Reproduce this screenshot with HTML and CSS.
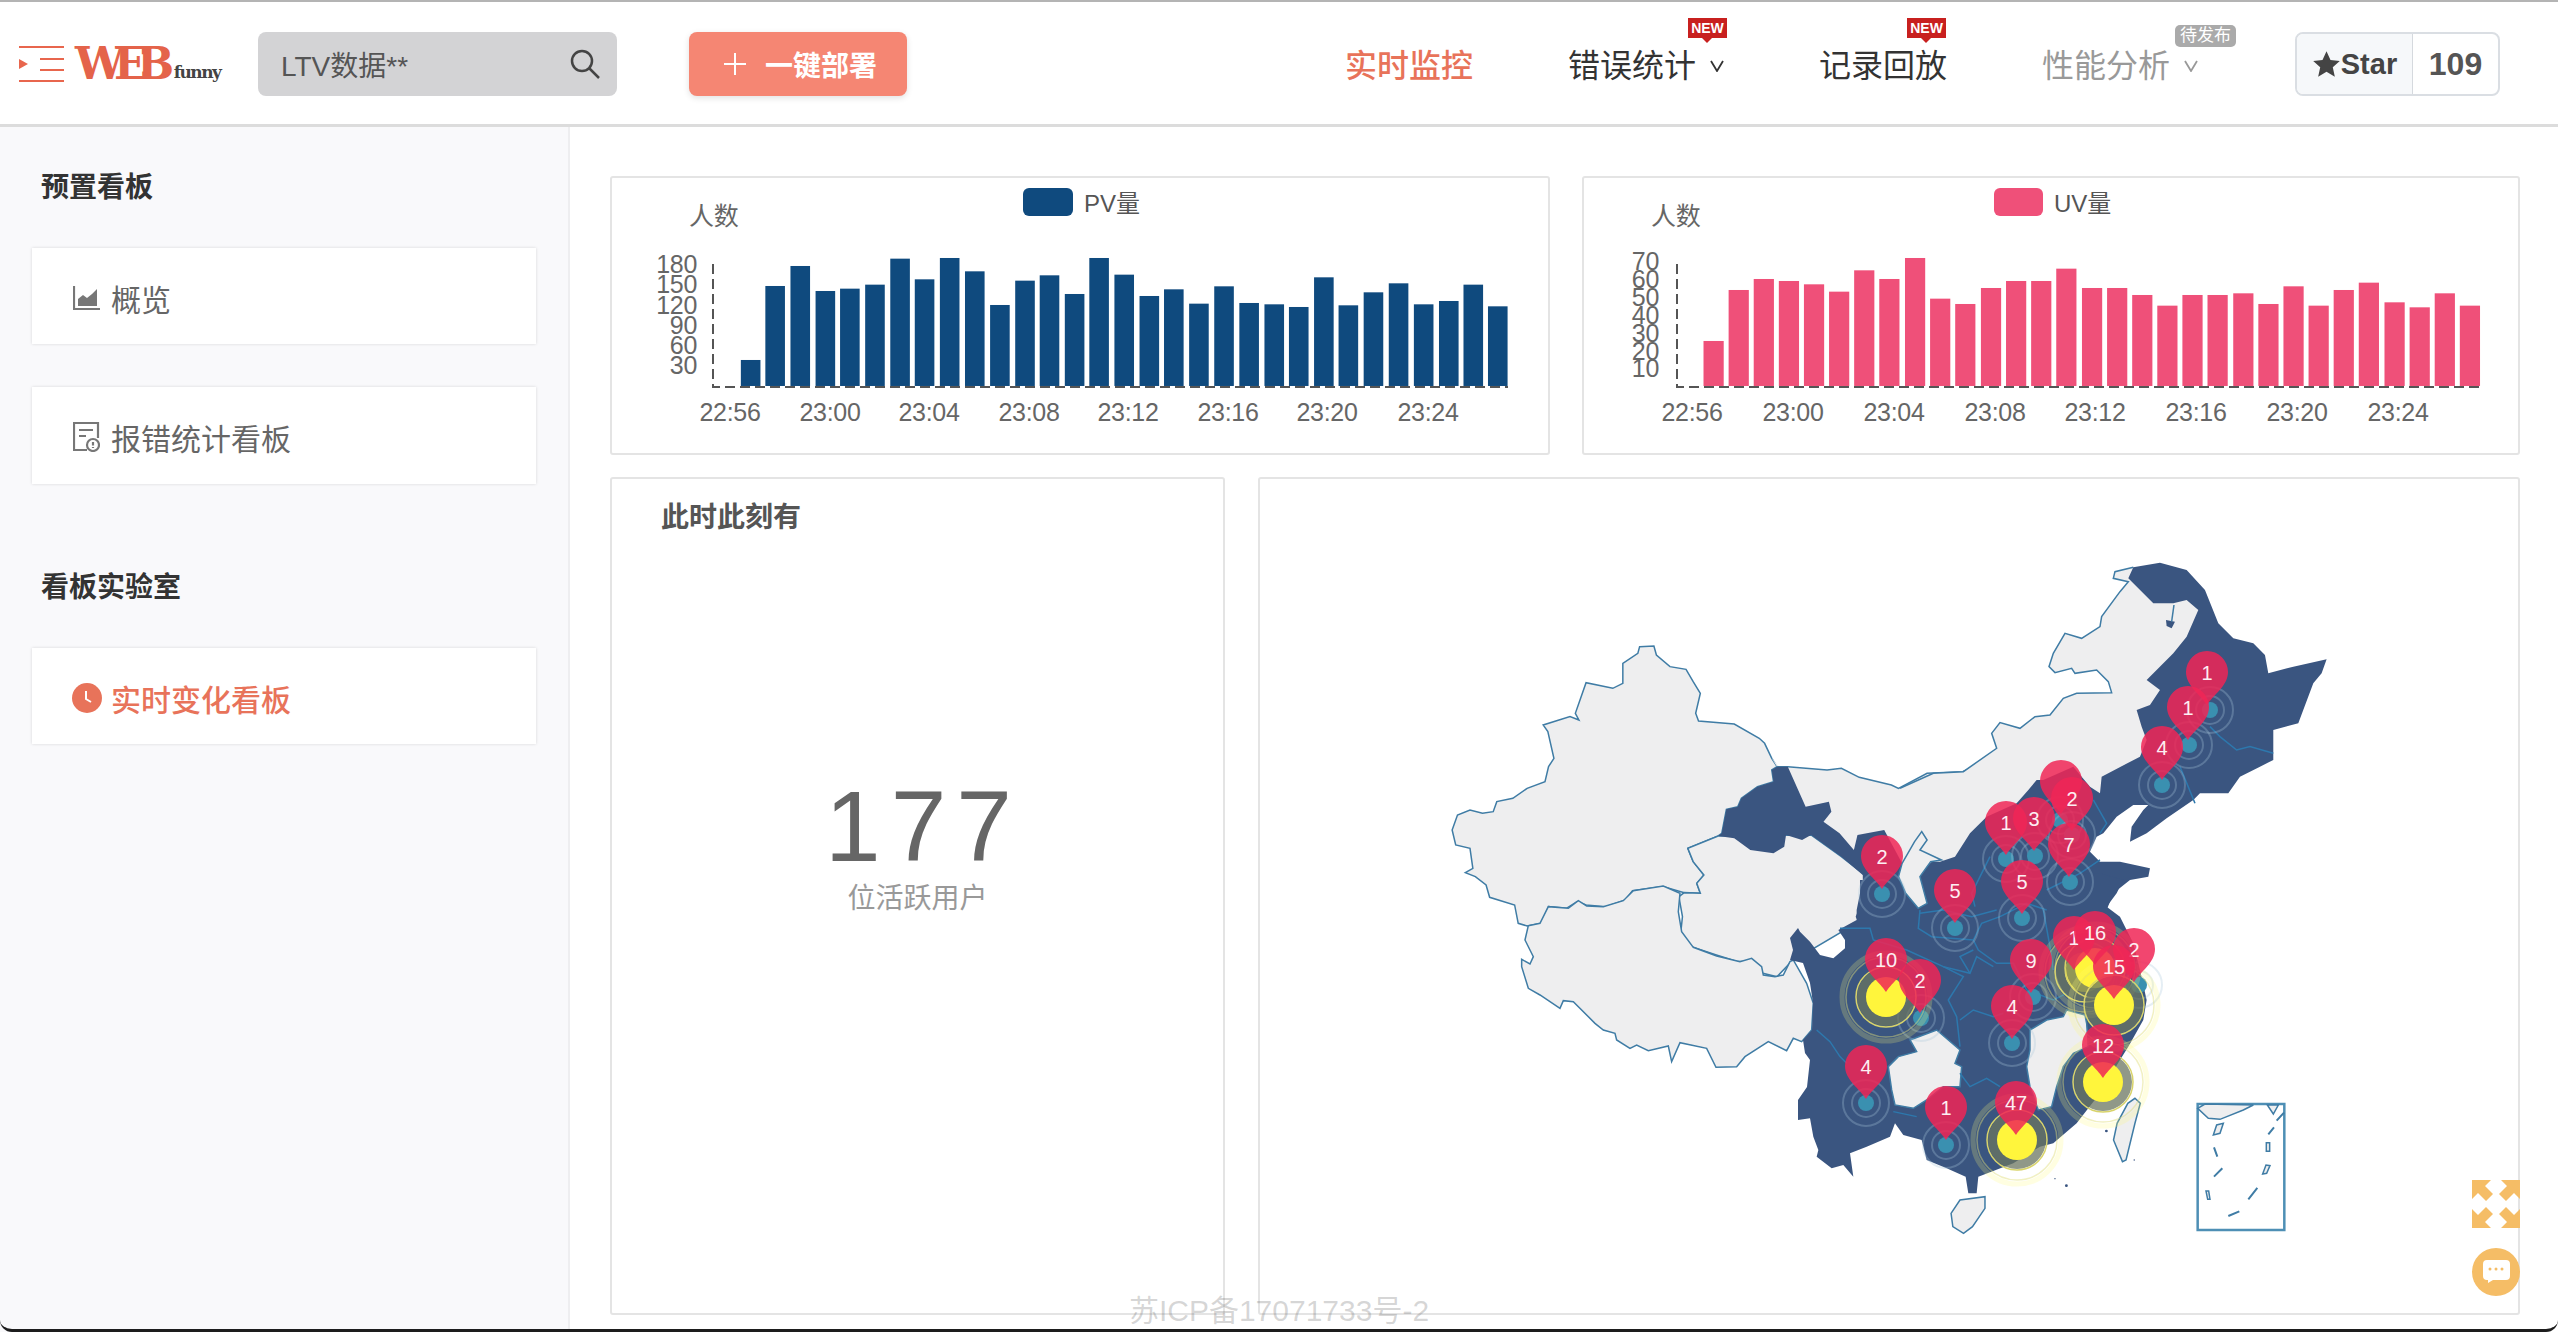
FILE: index.html
```html
<!DOCTYPE html>
<html lang="zh">
<head>
<meta charset="utf-8">
<title>WEBfunny</title>
<link rel="stylesheet" href="styles.css">
</head>
<body>
<header class="topbar">
  <a class="logo">
    <svg class="logo-mark" viewBox="0 0 46 36" width="46" height="36"><path class="logo-lines" d="M0 1h45M21 13h24M21 24h24M0 35h45"/><path class="logo-tri" d="M0 13l9 5-9 5z"/></svg>
    <span class="logo-web">WEB</span><span class="logo-funny">funny</span>
  </a>
  <div class="search">
    <span class="search-text">LTV数据**</span>
    <svg class="search-icon" viewBox="0 0 30 30" width="30" height="30"><circle cx="12" cy="12" r="10"/><path d="M19 19l10 10"/></svg>
  </div>
  <button class="deploy"><svg viewBox="0 0 22 22" width="22" height="22"><path d="M11 0v22M0 11h22"/></svg><span>一键部署</span></button>
  <nav class="nav">
    <a class="nav-item nav-active">实时监控</a>
    <a class="nav-item">错误统计<svg class="caret" viewBox="0 0 14 12" width="14" height="12"><path d="M1 1l6 10 6-10"/></svg><span class="flag flag-a">NEW</span></a>
    <a class="nav-item">记录回放<span class="flag flag-b">NEW</span></a>
    <a class="nav-item nav-muted">性能分析<svg class="caret" viewBox="0 0 14 12" width="14" height="12"><path d="M1 1l6 10 6-10"/></svg><span class="soon">待发布</span></a>
  </nav>
  <div class="star">
    <span class="star-left"><svg viewBox="0 0 24 24" width="29" height="29"><path d="M12 1l3.300 7.300 7.700.8-5.800 5.200 1.700 7.800L12 18.100 5.100 22.100l1.700-7.800L1 9.100l7.700-.8z"/></svg>Star</span>
    <span class="star-count">109</span>
  </div>
</header>

<main class="layout">
  <aside class="sidebar">
    <h3 class="side-title">预置看板</h3>
    <a class="side-card">
      <svg class="side-icon" viewBox="0 0 27 24" width="27" height="24"><path class="ic-stroke" d="M1 0v23h26"/><path class="ic-fill" d="M5 20v-7l5-4 4 3 5-4 5-5v17z"/></svg>
      <span>概览</span>
    </a>
    <a class="side-card side-card-next">
      <svg class="side-icon" viewBox="0 0 27 30" width="27" height="30"><path class="ic-stroke" d="M14 28H1V1h24v15M6 8h14M6 14h7"/><circle class="ic-stroke" cx="20" cy="23" r="6"/><path class="ic-stroke" d="M20 20v3.500M20 25v1"/></svg>
      <span>报错统计看板</span>
    </a>
    <h3 class="side-title side-title-next">看板实验室</h3>
    <a class="side-card side-active">
      <svg class="side-icon" viewBox="0 0 30 30" width="30" height="30"><circle class="clock-face" cx="15" cy="15" r="15"/><path class="clock-hand" d="M14 8v8l5 3"/></svg>
      <span>实时变化看板</span>
    </a>
  </aside>

  <section class="content">
    <div class="row-top">
      <div class="panel">
        <svg class="fill-svg" viewBox="612 178 936 275">
          <rect class="bar-pv" x="1023" y="188" width="50" height="28" rx="6"/>
          <text class="t-legend" x="1084" y="212">PV量</text>
          <text class="t-axis" x="689" y="225">人数</text>
          <g class="t-axis t-end">
            <text x="697" y="273">180</text><text x="697" y="293">150</text><text x="697" y="314">120</text><text x="697" y="334">90</text><text x="697" y="354">60</text><text x="697" y="374">30</text>
          </g>
          <g class="t-axis t-mid">
            <text x="730" y="421">22:56</text><text x="830" y="421">23:00</text><text x="929" y="421">23:04</text><text x="1029" y="421">23:08</text><text x="1128" y="421">23:12</text><text x="1228" y="421">23:16</text><text x="1327" y="421">23:20</text><text x="1428" y="421">23:24</text>
          </g>
          <path class="axis" d="M713 264V387H1508"/>
          <g class="bar-pv" transform="matrix(.6124 0 0 .3333 600 160)">
            <rect x="230" y="600" width="32" height="78"/><rect x="270" y="378" width="32" height="300"/><rect x="311" y="318" width="32" height="360"/><rect x="352" y="393" width="32" height="285"/><rect x="392" y="386" width="32" height="292"/><rect x="433" y="374" width="32" height="304"/><rect x="474" y="296" width="32" height="382"/><rect x="514" y="358" width="32" height="320"/><rect x="555" y="294" width="32" height="384"/><rect x="596" y="334" width="32" height="344"/><rect x="637" y="435" width="32" height="243"/><rect x="678" y="362" width="32" height="316"/><rect x="718" y="346" width="32" height="332"/><rect x="759" y="402" width="32" height="276"/><rect x="799" y="294" width="32" height="384"/><rect x="840" y="344" width="32" height="334"/><rect x="881" y="408" width="32" height="270"/><rect x="921" y="388" width="32" height="290"/><rect x="962" y="431" width="32" height="247"/><rect x="1003" y="379" width="32" height="299"/><rect x="1044" y="429" width="32" height="249"/><rect x="1085" y="433" width="32" height="245"/><rect x="1125" y="441" width="32" height="237"/><rect x="1166" y="352" width="32" height="326"/><rect x="1206" y="436" width="32" height="242"/><rect x="1247" y="397" width="32" height="281"/><rect x="1288" y="370" width="32" height="308"/><rect x="1329" y="433" width="32" height="245"/><rect x="1370" y="423" width="32" height="255"/><rect x="1410" y="374" width="32" height="304"/><rect x="1450" y="439" width="32" height="239"/>
          </g>
        </svg>
      </div>
      <div class="panel">
        <svg class="fill-svg" viewBox="1584 178 934 275">
          <rect class="bar-uv" x="1994" y="188" width="49" height="28" rx="6"/>
          <text class="t-legend" x="2054" y="212">UV量</text>
          <text class="t-axis" x="1651" y="225">人数</text>
          <g class="t-axis t-end">
            <text x="1659" y="270">70</text><text x="1659" y="288">60</text><text x="1659" y="306">50</text><text x="1659" y="324">40</text><text x="1659" y="342">30</text><text x="1659" y="360">20</text><text x="1659" y="377">10</text>
          </g>
          <g class="t-axis t-mid">
            <text x="1692" y="421">22:56</text><text x="1793" y="421">23:00</text><text x="1894" y="421">23:04</text><text x="1995" y="421">23:08</text><text x="2095" y="421">23:12</text><text x="2196" y="421">23:16</text><text x="2297" y="421">23:20</text><text x="2398" y="421">23:24</text>
          </g>
          <path class="axis" d="M1677 264V387H2484"/>
          <g class="bar-uv" transform="matrix(.6124 0 0 .3333 1570 160)">
            <rect x="218" y="543" width="33" height="135"/><rect x="259" y="390" width="33" height="288"/><rect x="300" y="357" width="33" height="321"/><rect x="341" y="363" width="33" height="315"/><rect x="382" y="373" width="33" height="305"/><rect x="423" y="395" width="33" height="283"/><rect x="464" y="331" width="33" height="347"/><rect x="505" y="357" width="33" height="321"/><rect x="547" y="294" width="33" height="384"/><rect x="588" y="416" width="33" height="262"/><rect x="629" y="432" width="33" height="246"/><rect x="671" y="384" width="33" height="294"/><rect x="712" y="363" width="33" height="315"/><rect x="753" y="363" width="33" height="315"/><rect x="794" y="326" width="33" height="352"/><rect x="836" y="384" width="33" height="294"/><rect x="877" y="384" width="33" height="294"/><rect x="918" y="405" width="33" height="273"/><rect x="959" y="437" width="33" height="241"/><rect x="1000" y="405" width="33" height="273"/><rect x="1041" y="405" width="33" height="273"/><rect x="1083" y="400" width="33" height="278"/><rect x="1124" y="432" width="33" height="246"/><rect x="1165" y="379" width="33" height="299"/><rect x="1206" y="437" width="33" height="241"/><rect x="1247" y="390" width="33" height="288"/><rect x="1288" y="368" width="33" height="310"/><rect x="1330" y="427" width="33" height="251"/><rect x="1371" y="442" width="33" height="236"/><rect x="1412" y="400" width="33" height="278"/><rect x="1453" y="437" width="33" height="241"/>
          </g>
        </svg>
      </div>
    </div>

    <div class="row-bottom">
      <div class="panel live">
        <h4 class="live-title">此时此刻有</h4>
        <div class="live-num">177</div>
        <div class="live-label">位活跃用户</div>
      </div>
      <div class="panel map-panel">
        <svg class="fill-svg" viewBox="1260 479 1258 834">
          <defs>
            <g id="dot">
              <circle class="ring" r="23"/><circle class="ring" r="14"/><circle class="dot-core" r="8"/>
            </g>
            <g id="big">
              <circle class="halo" r="44"/><circle class="big-glow" r="29"/><circle class="big-ring" r="40"/><circle class="big-ring2" r="30"/><circle class="big-core" r="20"/>
            </g>
            <path id="pin" class="pin" d="M0 32C-6 22-21 13-21-1A21 21 0 1 1 21-1C21 13 6 22 0 32Z"/>
          </defs>

          <!-- grey provinces, coordinates per source crop -->
          <g transform="matrix(.3571 0 0 .3333 1420 540)">
            <polygon class="land" points="615,320 655,318 662,345 700,380 745,388 765,425 785,460 772,520 780,543 880,552 950,595 965,610 985,655 1000,680 985,690 990,725 945,740 900,775 890,800 858,808 845,880 835,888 750,925 765,965 795,1005 775,1030 785,1060 740,1058 680,1040 595,1052 575,1080 520,1100 465,1095 440,1085 410,1105 360,1100 340,1150 300,1158 275,1150 265,1095 195,1072 185,1035 155,1010 127,998 148,985 140,925 100,915 90,870 105,825 140,810 175,820 205,815 215,785 260,775 300,745 350,725 360,680 375,655 358,575 345,555 420,530 445,540 435,520 465,428 540,445 568,430 568,370 610,340"/>
            <polygon class="land" points="750,925 835,888 1095,885 1180,950 1240,1000 1300,1100 1040,1265 1000,1310 960,1300 935,1265 890,1265 830,1245 760,1220 730,1180 735,1130 725,1070 740,1058 785,1060 775,1030 795,1005 765,965"/>
            <polygon class="land land-plain" points="985,655 1000,680 1030,680 1140,690 1180,685 1230,712 1320,735 1340,745 1420,700 1520,695 1568,670 1580,1000 1350,970 1225,885 1215,930 1175,880 1130,845 1080,800 1055,740"/>
            <polyline class="edge" points="1000,680 1030,680 1140,690 1180,685 1230,712 1320,735 1340,745 1420,700 1520,695 1568,670"/>
          </g>
          <g transform="matrix(.3333 0 0 .3333 1440 860)">
            <polygon class="land" points="265,197 300,190 325,140 385,145 415,122 440,138 490,140 550,122 580,92 670,78 720,100 715,155 725,215 760,262 830,288 900,305 935,295 965,320 970,345 1005,350 1030,345 1050,305 1060,300 1100,370 1120,430 1115,510 1085,545 1060,535 1040,572 985,545 915,590 890,620 828,622 800,565 720,548 695,605 685,558 625,572 590,555 570,565 530,540 525,520 490,510 465,490 400,425 370,422 360,445 300,405 265,385 245,320 245,298 270,312 280,290 255,240"/>
          </g>
          <g transform="matrix(.3333 0 0 .3333 1900 540)">
            <polygon class="land land-plain" points="700,82 645,95 640,115 685,125 660,155 605,230 600,260 545,295 495,280 460,340 447,380 465,398 515,385 525,400 590,390 625,425 635,458 530,460 490,475 450,525 405,530 360,565 300,548 275,580 290,625 190,695 100,700 0,745 -10,1000 60,1000 250,900 430,800 590,800 610,760 740,640 800,450 900,200 760,100"/>
            <polyline class="edge" points="700,82 645,95 640,115 685,125 660,155 605,230 600,260 545,295 495,280 460,340 447,380 465,398 515,385 525,400 590,390 625,425 635,458 530,460 490,475 450,525 405,530 360,565 300,548 275,580 290,625 190,695 100,700 0,745"/>
          </g>

          <!-- blue provinces -->
          <g transform="matrix(.3333 0 0 .3333 1900 540)">
            <polygon class="dark" points="700,82 780,68 860,90 915,150 955,250 1000,295 1060,310 1095,345 1105,400 1180,380 1280,358 1265,400 1240,430 1195,550 1120,570 1120,660 1080,680 1020,710 985,760 900,760 880,780 800,835 740,880 690,905 695,860 730,810 745,795 700,795 650,830 610,880 590,890 570,935 600,965 660,965 750,985 745,1010 690,1020 640,1060 620,1110 560,1150 0,1150 -10,1000 60,1000 95,965 120,965 165,950 210,880 260,830 350,790 385,750 410,720 430,720 520,680 570,740 600,760 605,710 720,650 740,600 725,560 710,510 750,495 780,450 740,420 820,340 860,290 895,210 860,180 820,190 760,190 685,115"/>
            <polygon class="dark" points="798,240 825,245 815,265 800,258"/>
            <polyline class="edge" points="822,195 815,245"/>
          </g>
          <g transform="matrix(.3571 0 0 .3333 1420 540)">
            <polygon class="dark" points="1000,680 1030,680 1055,740 1080,800 1145,785 1152,815 1130,845 1175,880 1215,930 1225,885 1300,870 1350,970 1400,1010 1400,1200 1250,1200 1220,1130 1240,1075 1240,1005 1180,950 1095,885 1070,900 1025,885 1020,920 990,940 925,930 880,895 835,888 845,880 858,808 890,800 900,775 945,740 990,725 985,690"/>
          </g>
          <g transform="matrix(.3333 0 0 .3333 1800 860)">
            <polygon class="dark" points="-6,204 0,215 30,245 60,285 100,295 135,265 135,240 115,210 170,180 170,150 180,100 180,60 360,60 400,40 900,40 970,60 950,100 920,140 960,170 1000,250 1020,330 1040,420 1030,480 985,560 960,600 900,700 830,790 760,850 720,860 640,910 535,950 530,1000 505,1000 497,950 440,925 380,900 365,840 310,825 285,790 270,830 200,860 150,880 160,950 130,915 95,925 50,890 55,870 40,830 30,775 -6,780 -6,720 21,681 30,600 15,579 9,540 36,510 39,429 30,369 9,309 -30,300 -21,270 -30,234"/>
            <polygon class="land" points="690,510 740,480 790,470 800,450 855,465 860,490 865,560 820,580 790,620 770,680 755,740 715,750 690,680 680,620 690,570"/>
            <polygon class="land" points="265,620 295,590 350,575 330,540 410,510 480,570 465,610 485,620 480,680 430,680 380,720 340,745 285,735 275,690"/>
            <polyline class="prov" points="120,205 210,205 220,240 320,270 430,320 510,340 530,290 580,320"/>
            <polyline class="prov" points="360,150 355,205 395,230 520,240 545,190 600,170 680,130 740,150"/>
            <polyline class="prov" points="520,240 535,270 590,310 640,310 680,390 760,420 800,400"/>
            <polyline class="prov" points="430,320 490,350 445,420 470,470 480,560"/>
            <polyline class="prov" points="480,480 520,450 580,470 610,460"/>
            <polyline class="prov" points="510,340 480,290 520,270"/>
            <polyline class="prov" points="50,510 90,545 120,590 140,610"/>
            <polyline class="prov" points="480,640 510,680 560,655 600,680"/>
            <polyline class="prov" points="280,755 350,770"/>
            <polyline class="prov" points="730,150 750,260 760,330"/>
          </g>
          <g transform="matrix(.3571 0 0 .3333 1420 540)">
            <polygon class="land" points="1350,970 1385,905 1405,875 1420,900 1400,930 1460,960 1430,965 1400,1010 1420,1090 1395,1105 1360,1060 1340,1010"/>
          </g>
          <g transform="matrix(.3333 0 0 .3333 1900 540)">
            <polyline class="prov" points="930,560 960,590 1010,630 1050,620 1120,640"/>
            <polyline class="prov" points="840,680 885,790"/>
            <polyline class="prov" points="580,780 620,850 600,880"/>
            <polyline class="prov" points="440,1050 540,1000 600,960"/>
            <polyline class="prov" points="225,1100 215,1060 270,950"/>
            <polyline class="prov" points="60,1120 130,1110 215,1130 290,1110"/>
          </g>
          <!-- islands and inset -->
          <g transform="matrix(.3571 0 0 .3333 1760 880)">
            <polygon class="land" points="535,1000 560,960 630,950 630,985 595,1040 570,1060 540,1040"/>
            <polygon class="land" points="1050,655 1065,670 1050,730 1025,840 1015,845 990,780 1000,730 1030,670"/>
            <circle class="isle" cx="970" cy="753" r="4"/><circle class="isle" cx="858" cy="917" r="4"/><circle class="isle" cx="826" cy="896" r="2"/><circle class="isle" cx="1048" cy="840" r="2"/>
          </g>
          <g transform="matrix(.3333 0 0 .3333 2160 1080)">
            <rect class="inset" x="113" y="72" width="260" height="378"/>
            <polygon class="land" points="113,85 135,72 280,75 250,90 180,118 145,115"/>
            <polygon class="land" points="322,75 355,75 340,102"/>
            <polygon class="land" points="160,165 170,135 190,130 180,160"/>
            <polygon class="land" points="138,333 146,333 150,358 143,358"/>
            <polygon class="land" points="308,282 318,255 330,257 320,280"/>
            <rect class="land" x="319" y="188" width="10" height="26"/>
            <path class="dash" d="M162 202l10 28M162 290l25-25M205 408l33-14M265 358l27-34M325 163l17-21M350 122l22-24"/>
          </g>

          <!-- markers -->
          <use href="#dot" x="2210" y="710"/><use href="#dot" x="2189" y="745"/><use href="#dot" x="2162" y="785"/><use href="#dot" x="2060" y="820"/><use href="#dot" x="2072" y="835"/><use href="#dot" x="2006" y="859"/><use href="#dot" x="2035" y="856"/><use href="#dot" x="2070" y="882"/><use href="#dot" x="2022" y="918"/><use href="#dot" x="1955" y="928"/><use href="#dot" x="1882" y="894"/><use href="#dot" x="2033" y="997"/><use href="#dot" x="2012" y="1043"/><use href="#dot" x="1921" y="1018"/><use href="#dot" x="1866" y="1103"/><use href="#dot" x="1946" y="1145"/><use href="#dot" x="2139" y="985"/>
          <use href="#big" x="1886" y="997"/><use href="#big" x="2017" y="1140"/><use href="#big" x="2103" y="1082"/><use href="#big" x="2085" y="972"/><use href="#big" x="2095" y="968"/><use href="#big" x="2114" y="1005"/>

          <g class="pin-labels">
            <use href="#pin" x="2061" y="782"/>
            <use href="#pin" x="2207" y="673"/><text x="2207" y="680">1</text>
            <use href="#pin" x="2188" y="708"/><text x="2188" y="715">1</text>
            <use href="#pin" x="2162" y="748"/><text x="2162" y="755">4</text>
            <use href="#pin" x="2072" y="799"/><text x="2072" y="806">2</text>
            <use href="#pin" x="2006" y="823"/><text x="2006" y="830">1</text>
            <use href="#pin" x="2034" y="819"/><text x="2034" y="826">3</text>
            <use href="#pin" x="2069" y="845"/><text x="2069" y="852">7</text>
            <use href="#pin" x="2022" y="882"/><text x="2022" y="889">5</text>
            <use href="#pin" x="1955" y="891"/><text x="1955" y="898">5</text>
            <use href="#pin" x="1882" y="857"/><text x="1882" y="864">2</text>
            <use href="#pin" x="2031" y="961"/><text x="2031" y="968">9</text>
            <use href="#pin" x="2012" y="1007"/><text x="2012" y="1014">4</text>
            <use href="#pin" x="1920" y="981"/><text x="1920" y="988">2</text>
            <use href="#pin" x="1886" y="960"/><text x="1886" y="967">10</text>
            <use href="#pin" x="1866" y="1067"/><text x="1866" y="1074">4</text>
            <use href="#pin" x="1946" y="1108"/><text x="1946" y="1115">1</text>
            <use href="#pin" x="2016" y="1103"/><text x="2016" y="1110">47</text>
            <use href="#pin" x="2103" y="1046"/><text x="2103" y="1053">12</text>
            <use href="#pin" x="2134" y="950"/><text x="2134" y="957">2</text>
            <use href="#pin" x="2074" y="938"/><text x="2074" y="945">1</text>
            <use href="#pin" x="2095" y="933"/><text x="2095" y="940">16</text>
            <use href="#pin" x="2114" y="967"/><text x="2114" y="974">15</text>
          </g>
        </svg>
      </div>
    </div>
  </section>
</main>

<div class="record">苏ICP备17071733号-2</div>
<a class="float-btn float-expand">
  <svg viewBox="0 0 48 48" width="48" height="48"><polygon points="0,0 19,0 13,6 21,14 14,21 6,13 0,19"/><polygon points="48,0 29,0 35,6 27,14 34,21 42,13 48,19"/><polygon points="0,48 19,48 13,42 21,34 14,27 6,35 0,29"/><polygon points="48,48 29,48 35,42 27,34 34,27 42,35 48,29"/></svg>
</a>
<a class="float-btn float-chat">
  <svg viewBox="0 0 48 48" width="48" height="48"><circle class="chat-bg" cx="24" cy="24" r="24"/><path class="chat-bubble" d="M15 12h19a4 4 0 0 1 4 4v12a4 4 0 0 1-4 4H21l-5 3v-3h-1a4 4 0 0 1-4-4V16a4 4 0 0 1 4-4z"/><circle class="chat-bg" cx="18" cy="21" r="1.500"/><circle class="chat-bg" cx="24" cy="21" r="1.500"/><circle class="chat-bg" cx="30" cy="21" r="1.500"/></svg>
</a>
<div class="window-edge"></div>
</body>
</html>
```
FILE: styles.css
```css
* { box-sizing: border-box; }
html, body { margin: 0; padding: 0; height: 100%; }
body {
  position: relative;
  overflow: hidden;
  background: #fff;
  font-family: "Liberation Sans", "Noto Sans CJK SC", sans-serif;
  color: #333;
}

/* top bar */
.topbar {
  display: flex;
  align-items: center;
  height: 127px;
  padding: 2px 58px 0 19px;
  border-top: 2px solid #b4b4b4;
  border-bottom: 3px solid #dcdcdc;
}
.logo { display: flex; align-items: flex-end; width: 239px; height: 40px; }
.logo-mark { flex: none; margin-right: 10px; margin-bottom: 2px; }
.logo-lines { fill: none; stroke: #e8664d; stroke-width: 2; }
.logo-tri { fill: #e8664d; }
.logo-web {
  font-family: "DejaVu Serif", serif;
  font-weight: 700;
  font-size: 44px;
  line-height: 40px;
  letter-spacing: -10.500px;
  color: #e4634a;
  margin-right: 10px;
}
.logo-funny {
  font-family: "DejaVu Serif", serif;
  font-weight: 700;
  font-size: 17px;
  line-height: 22px;
  letter-spacing: -1.500px;
  color: #444;
  margin-bottom: 1px;
}
.search {
  display: flex;
  align-items: center;
  justify-content: space-between;
  width: 359px;
  height: 64px;
  padding: 0 17px 0 23px;
  background: #d3d3d5;
  border-radius: 8px;
}
.search-text { font-size: 28px; color: #555; }
.search-icon circle, .search-icon path { fill: none; stroke: #444; stroke-width: 2.500; }
.deploy {
  display: flex;
  align-items: center;
  gap: 19px;
  width: 218px;
  height: 64px;
  margin-left: 72px;
  padding: 0 0 0 35px;
  border: 0;
  border-radius: 8px;
  background: #f58673;
  box-shadow: 0 2px 6px rgba(0, 0, 0, .12);
  color: #fff;
  font: 700 28px "Liberation Sans", "Noto Sans CJK SC", sans-serif;
}
.deploy svg path { fill: none; stroke: #fff; stroke-width: 2; }
.nav { display: flex; align-items: center; gap: 95px; margin: -2px 0 0 438px; }
.nav-item { position: relative; display: flex; align-items: center; font-size: 32px; color: #333; white-space: nowrap; }
.nav-active { color: #e8735a; font-weight: 500; }
.nav-muted { color: #999; }
.caret { margin-left: 14px; margin-top: 6px; }
.caret path { fill: none; stroke: currentColor; stroke-width: 1.800; }
.flag {
  position: absolute;
  top: -22px;
  height: 20px;
  width: 39px;
  background: #c8201f;
  color: #fff;
  font-size: 14px;
  font-weight: 700;
  line-height: 20px;
  text-align: center;
}
.flag::after {
  content: "";
  position: absolute;
  left: 14px;
  top: 20px;
  border: 5px solid transparent;
  border-top-color: #c8201f;
}
.flag-a { left: 120px; }
.flag-b { left: 88px; }
.soon {
  position: absolute;
  top: -15px;
  left: 133px;
  width: 61px;
  height: 22px;
  border-radius: 5px;
  background: #aaa;
  color: #fff;
  font-size: 17px;
  line-height: 22px;
  text-align: center;
}
.star {
  display: flex;
  height: 64px;
  width: 205px;
  margin-left: auto;
  border: 2px solid #dadee3;
  border-radius: 8px;
  color: #444;
  font-weight: 700;
}
.star-left {
  display: flex;
  align-items: center;
  justify-content: center;
  width: 116px;
  background: #f6f8fa;
  border-right: 1px solid #d5d9de;
  border-radius: 6px 0 0 6px;
  font-size: 29px;
}
.star-left svg { fill: #444; }
.star-count { flex: 1; text-align: center; line-height: 60px; font-size: 32px; color: #555; }

/* layout */
.layout { display: flex; height: 1205px; }
.sidebar {
  flex: none;
  width: 570px;
  padding: 41px 32px 0;
  background: #f9f9fb;
  border-right: 2px solid #eeeef0;
}
.side-title { margin: 0 0 40px 9px; font-size: 28px; line-height: 40px; font-weight: 700; color: #333; }
.side-title-next { margin-top: 84px; }
.side-card {
  display: flex;
  align-items: center;
  gap: 11px;
  width: 504px;
  height: 96px;
  padding: 3px 0 0 41px;
  background: #fff;
  box-shadow: 0 0 3px rgba(0, 0, 0, .14);
  font-size: 30px;
  color: #666;
}
.side-card-next { margin-top: 43px; height: 97px; }
.side-active { color: #e8735a; padding-left: 40px; gap: 9px; font-weight: 500; }
.side-icon { flex: none; }
.ic-stroke { fill: none; stroke: #777; stroke-width: 2.200; }
.ic-fill { fill: #777; }
.clock-face { fill: #e8735a; }
.clock-hand { fill: none; stroke: #fff; stroke-width: 2; }

.content { flex: 1; padding: 49px 38px 0 40px; }
.row-top { display: grid; grid-template-columns: 940px 938px; gap: 32px; height: 279px; }
.row-bottom { display: grid; grid-template-columns: 615px 1262px; gap: 33px; height: 838px; margin-top: 22px; }
.panel { border: 2px solid #e4e4e4; border-radius: 3px; background: #fff; min-width: 0; }
.fill-svg { display: block; width: 100%; height: 100%; }

/* charts */
.bar-pv { fill: #0f4a7e; }
.bar-uv { fill: #ef5079; }
.axis { fill: none; stroke: #555; stroke-width: 2; stroke-dasharray: 10 5; }
.t-axis { font-size: 25px; fill: #666; letter-spacing: -.3px; }
.t-legend { font-size: 24px; fill: #555; }
.t-end text { text-anchor: end; }
.t-mid text { text-anchor: middle; }

/* live number */
.live { padding: 19px 0 0 49px; }
.live-title { margin: 0; font-size: 28px; line-height: 40px; font-weight: 700; color: #555; }
.live-num {
  margin: 238px 0 0 -49px;
  padding-left: 12px;
  font-size: 100px;
  line-height: 100px;
  letter-spacing: 10px;
  text-align: center;
  color: #666;
}
.live-label { margin: 3px 0 0 -49px; font-size: 28px; line-height: 40px; text-align: center; color: #999; }

/* map */
.land { fill: #eeeeef; stroke: #3f7ca5; stroke-width: 1.500px; vector-effect: non-scaling-stroke; }
.land-plain { stroke: none; }
.edge { fill: none; stroke: #3f7ca5; stroke-width: 1.500px; vector-effect: non-scaling-stroke; }
.dark { fill: #3a5580; }
.prov { fill: none; stroke: #2d78ad; stroke-width: 1.500px; vector-effect: non-scaling-stroke; }
.isle { fill: #3a5580; }
.inset { fill: #fff; stroke: #4e8fb5; stroke-width: 2.500px; vector-effect: non-scaling-stroke; }
.dash { fill: none; stroke: #3f7ca5; stroke-width: 2px; vector-effect: non-scaling-stroke; }
.ring { fill: none; stroke: rgba(170, 200, 220, .3); stroke-width: 2; }
.dot-core { fill: #3a90b0; }
.halo { fill: none; stroke: rgba(255, 250, 120, .22); stroke-width: 5; }
.big-glow { fill: #6b7560; opacity: .75; }
.big-ring { fill: none; stroke: rgba(225, 222, 120, .45); stroke-width: 1.500; }
.big-ring2 { fill: none; stroke: #d8d36a; stroke-width: 1.500; }
.big-core { fill: #fff53c; }
.pin { fill: #f02656; opacity: .85; }
.pin-labels text { font-size: 20px; fill: #fdeef2; text-anchor: middle; }

/* overlays */
.record {
  position: absolute;
  left: 0;
  right: 0;
  bottom: 1px;
  font-size: 30px;
  line-height: 40px;
  text-align: center;
  color: rgba(110, 110, 110, .28);
}
.float-btn { position: absolute; right: 38px; width: 48px; height: 48px; }
.float-btn svg { display: block; }
.float-expand { top: 1180px; fill: #f5bd66; }
.float-chat { top: 1248px; }
.chat-bg { fill: #f5bd66; }
.chat-bubble { fill: #fff; }
.window-edge {
  position: absolute;
  left: 0;
  right: 0;
  bottom: 0;
  height: 14px;
  border-bottom: 3px solid #1d1d1d;
  border-radius: 0 0 12px 12px;
}
```
